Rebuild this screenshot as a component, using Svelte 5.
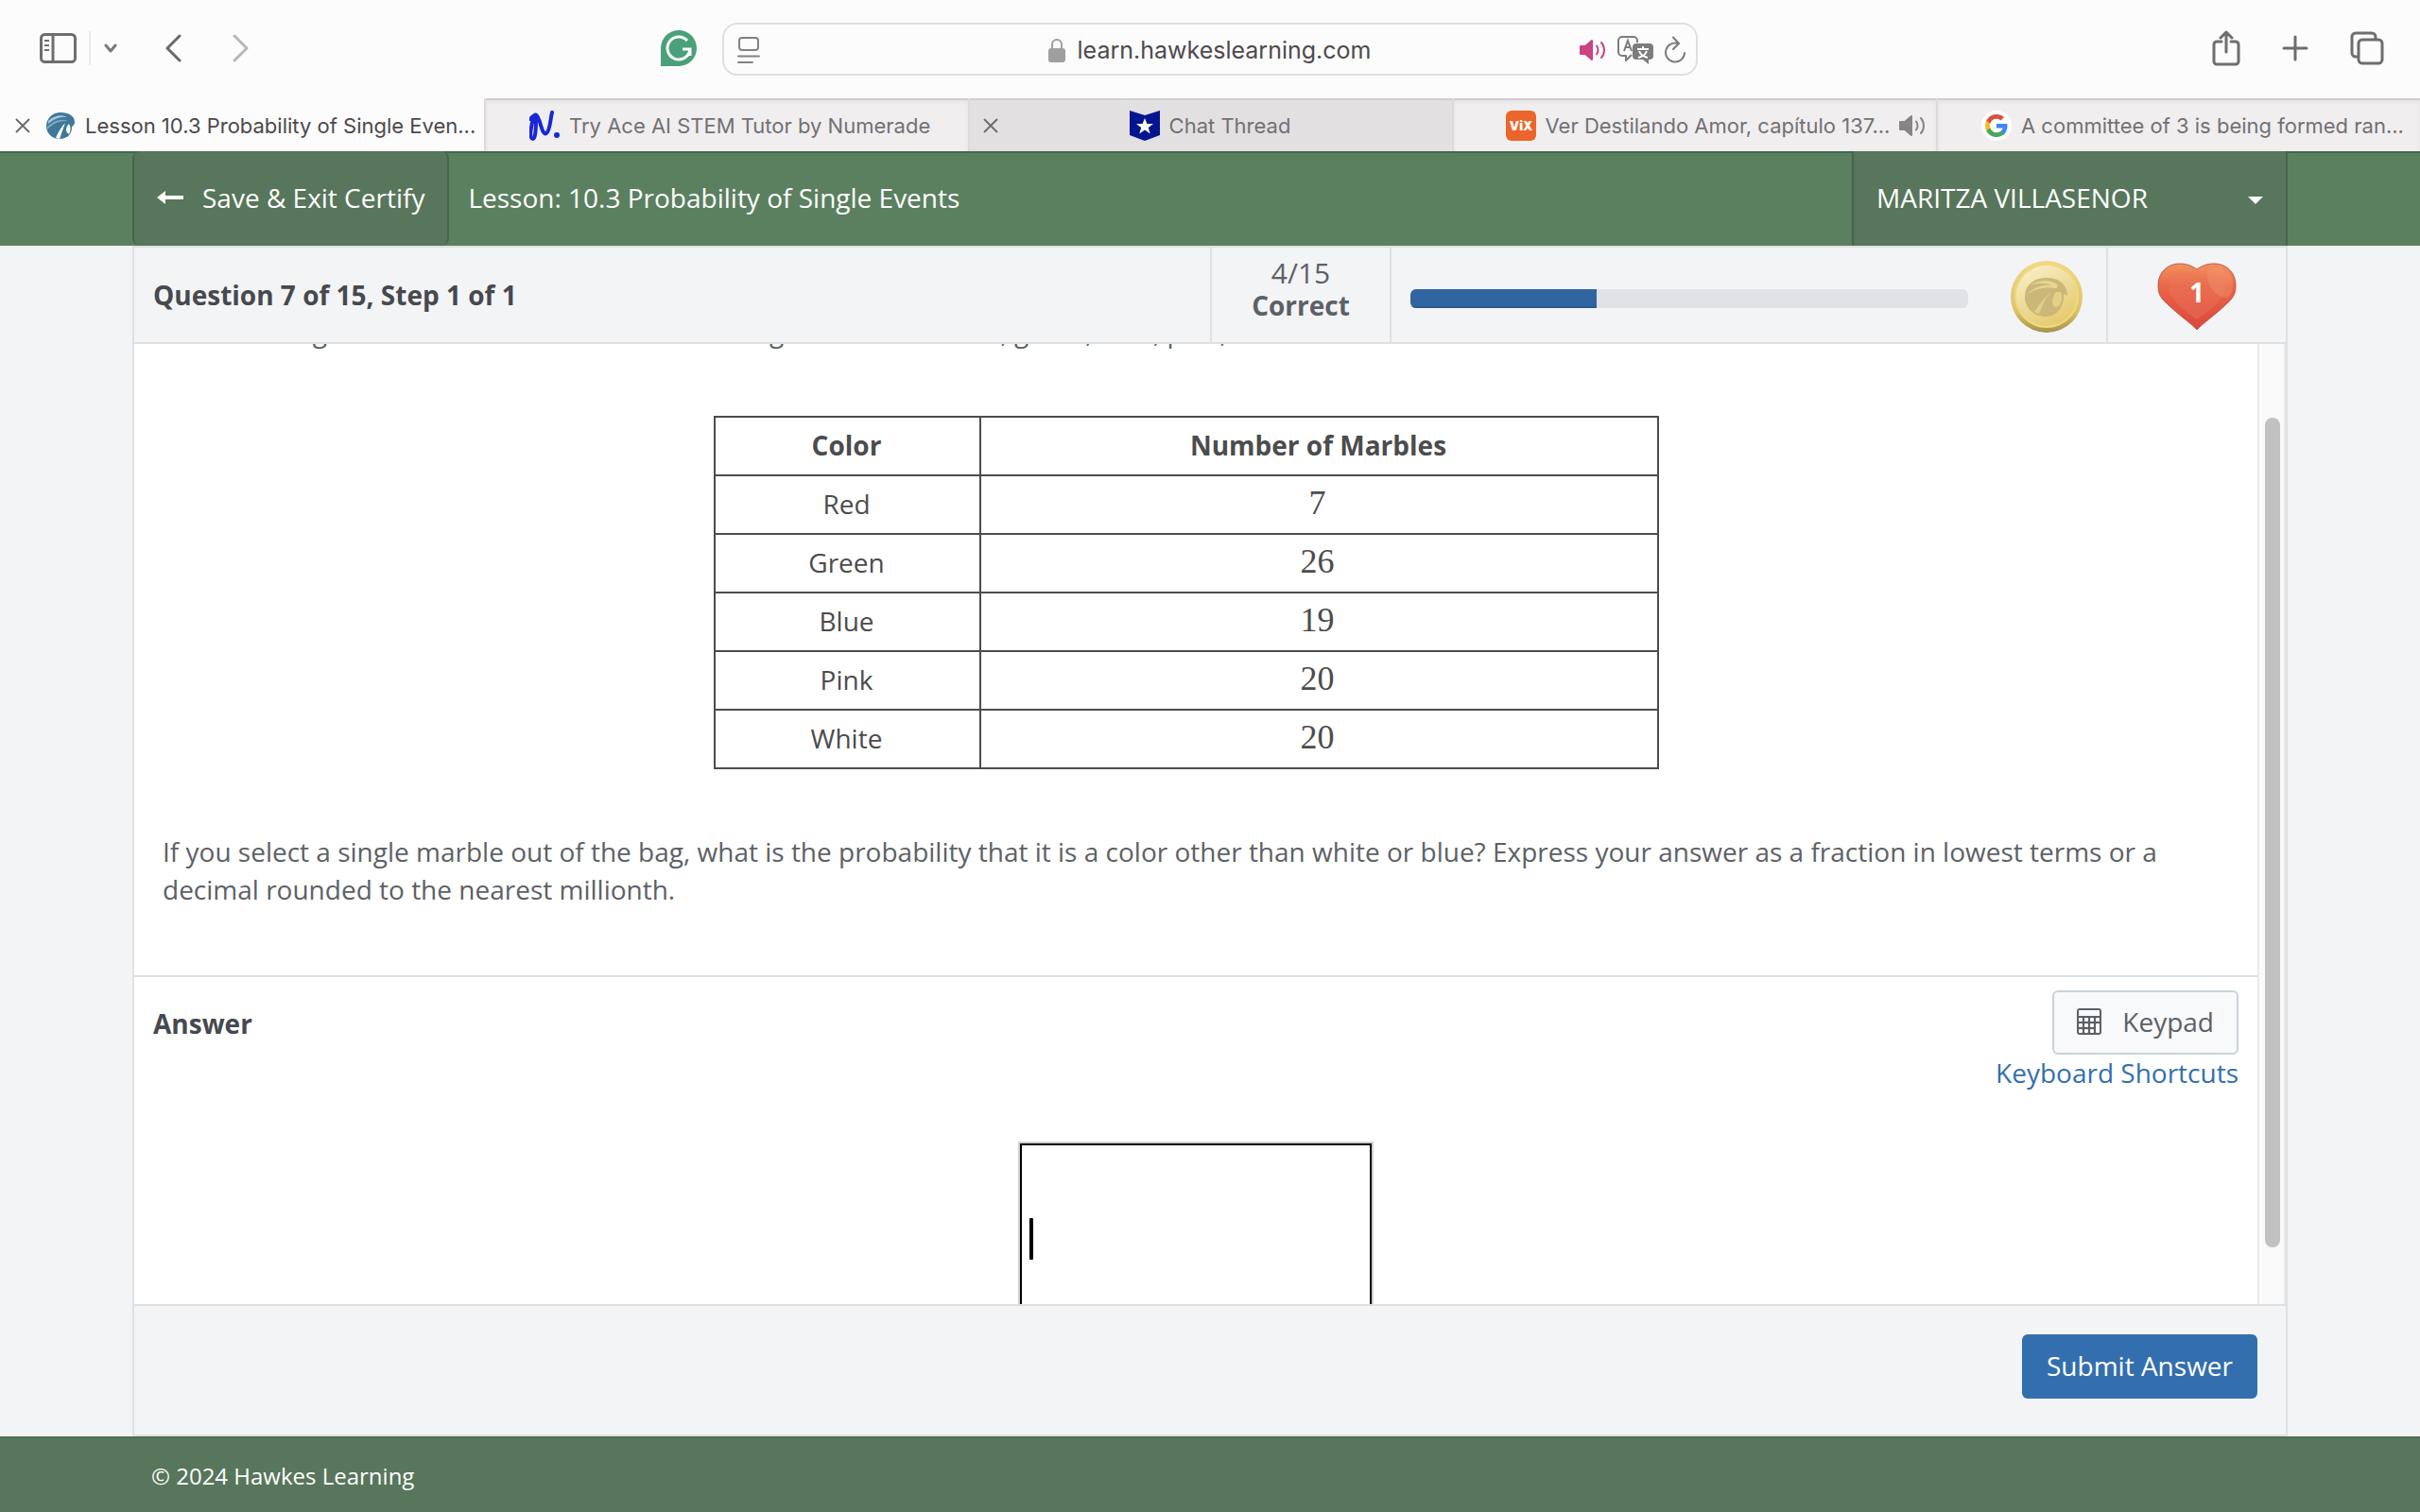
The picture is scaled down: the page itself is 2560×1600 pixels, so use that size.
<script>
    let correct = $state(4);
    let lives = $state(1);
    let answer = $state("");
    let pane;

    const tabs = [
        { title: "Lesson 10.3 Probability of Single Even...", icon: "hawkes", active: true, close: true },
        { title: "Try Ace AI STEM Tutor by Numerade", icon: "numerade" },
        { title: "Chat Thread", icon: "star", hover: true, close: true },
        { title: "Ver Destilando Amor, capítulo 137...", icon: "vix", audio: true },
        { title: "A committee of 3 is being formed ran...", icon: "google" },
    ];

    const marbles = [
        ["Red", 7],
        ["Green", 26],
        ["Blue", 19],
        ["Pink", 20],
        ["White", 20],
    ];

    // the bar counts towards the 12 needed for mastery
    let percent = $derived((correct / 12) * 100);

    $effect(() => {
        pane.scrollTop = 90;
    });
</script>

{#snippet speaker()}
    <svg width="30" height="24" viewBox="0 0 30 24" fill="none" stroke="currentColor" stroke-width="2" stroke-linecap="round">
        <path d="M2 8h5l7-6v20l-7-6H2z" fill="currentColor" stroke-linejoin="round" />
        <path d="M19 7.500c2 2.500 2 6.500 0 9M24 4c4 4.500 4 11.500 0 16" />
    </svg>
{/snippet}

{#snippet favicon(name)}
    <svg class="favicon" width="32" height="32" viewBox="0 0 32 32">
        {#if name === "hawkes"}
            <path d="M16 2C8 2 1 8 1 16.500 1 24 7 30 15 30c8 0 13-5 13-12 0-2 3-2 3-6C31 6 25 2 16 2z" fill="#3f789b" />
            <path d="M3 11C9 5 17 4 23 7c-7-.5-13 1-20 7z" fill="#a9c6d6" />
            <path d="M2 17C9 10 17 8 24 11c-8-.5-15 2-22 9z" fill="#7ea8bf" />
            <path d="M21 13c-4 4-7 9-10 16l4 1c2-6 4-11 6-17zM25 14c2 3 2 7 0 11-2-1-3-3-3-5 0-2 1-4 3-6z" fill="#fff" />
        {:else if name === "numerade"}
            <path d="M2 9c3-4 6-5 6-2 0 6 0 23-3 23-5 0-2-12 0-23 3-6 5 0 7 5 2 7 4 14 7 12 4-3 4-14 6-22" transform="translate(-1 0)" fill="none" stroke="#1828d8" stroke-width="4" stroke-linecap="round" stroke-linejoin="round" />
            <circle cx="29" cy="26" r="3" fill="#1828d8" />
        {:else if name === "star"}
            <path d="M0 0l16 5 16-5v26l-16 6-16-6z" fill="#04158f" />
            <path d="M16 8l2.400 6h6.600l-5.200 4 1.900 6.500-5.700-4-5.700 4 1.900-6.500-5.200-4h6.600z" fill="#fff" />
        {:else if name === "vix"}
            <rect width="32" height="32" rx="6" fill="#ec652b" />
            <text x="16" y="21" text-anchor="middle" font-family="Inter, sans-serif" font-size="13" font-weight="900" fill="#fff">ViX</text>
        {:else}
            <circle cx="16" cy="16" r="16" fill="#fff" />
            <g transform="translate(4 4)">
                <path d="M23.500 12.300c0-.9-.1-1.600-.2-2.300H12v4.500h6.500c-.3 1.500-1.100 2.800-2.400 3.700v3h3.900c2.200-2.100 3.500-5.100 3.500-8.900z" fill="#4285f4" />
                <path d="M12 24c3.200 0 6-1.100 8-2.900l-3.900-3c-1.100.7-2.400 1.200-4.100 1.200-3.100 0-5.800-2.100-6.700-5H1.300v3.100C3.300 21.300 7.300 24 12 24z" fill="#4ca65b" />
                <path d="M5.300 14.300c-.5-1.500-.5-3.100 0-4.600V6.600h-4c-1.700 3.400-1.700 7.400 0 10.800z" fill="#f3bb2c" />
                <path d="M12 4.800c1.800 0 3.300.6 4.600 1.800L20 3.100C17.900 1.200 15.200 0 12 0 7.300 0 3.300 2.700 1.300 6.600l4 3.100c.9-2.900 3.600-4.900 6.700-4.900z" fill="#d8503f" />
            </g>
        {/if}
    </svg>
{/snippet}

<div class="window">
    <div class="toolbar">
        <div class="tools left">
            <button class="tool sidebar" aria-label="Show sidebar">
                <svg width="40" height="32" viewBox="0 0 40 32" fill="none" stroke="#6f6d6e" stroke-width="3">
                    <rect x="1.500" y="1.500" width="36" height="29" rx="4" />
                    <path d="M14 2v28" />
                    <path d="M5 8h5M5 13h5M5 18h5" stroke-width="2" />
                </svg>
            </button>
            <button class="tool menu" aria-label="Tab groups">
                <svg width="14" height="10" viewBox="0 0 14 10" fill="none" stroke="#7b797a" stroke-width="3" stroke-linecap="round" stroke-linejoin="round">
                    <path d="M2 2l5 6 5-6" />
                </svg>
            </button>
            <button class="tool back" aria-label="Back">
                <svg width="18" height="30" viewBox="0 0 18 30" fill="none" stroke="#6a6869" stroke-width="3" stroke-linecap="round" stroke-linejoin="round">
                    <path d="M16 2L3 15l13 13" />
                </svg>
            </button>
            <button class="tool forward" aria-label="Forward">
                <svg width="18" height="30" viewBox="0 0 18 30" fill="none" stroke="#b9b7b8" stroke-width="3" stroke-linecap="round" stroke-linejoin="round">
                    <path d="M2 2l13 13L2 28" />
                </svg>
            </button>
            <button class="tool grammarly" aria-label="Grammarly">
                <svg width="38" height="38" viewBox="0 0 38 38" fill="none">
                    <path d="M19 0a19 19 0 0 1 0 38H0V19A19 19 0 0 1 19 0z" fill="#4aa078" />
                    <path d="M28 11a12 12 0 1 0 3 9h-8M31 19v8" stroke="#fff" stroke-width="3" />
                </svg>
            </button>
        </div>

        <div class="address">
            <svg width="24" height="30" viewBox="0 0 24 30" fill="none" stroke="#838182" stroke-width="2" stroke-linecap="round">
                <rect x="2" y="2" width="20" height="13" rx="3" />
                <path d="M1 21.500h22M1 28h15" />
            </svg>
            <div class="site">
                <svg width="20" height="26" viewBox="0 0 20 26" fill="none">
                    <rect x="1" y="11" width="18" height="15" rx="3" fill="#a09ea0" />
                    <path d="M5 12V7a5 5 0 0 1 10 0v5" stroke="#a09ea0" stroke-width="2" />
                </svg>
                <span>learn.hawkeslearning.com</span>
            </div>
            <div class="page-actions">
                <span class="playing">{@render speaker()}</span>
                <svg width="38" height="30" viewBox="0 0 38 30" fill="none">
                    <path d="M15 20l-6 6v-5H5a4 4 0 0 1-4-4V5a4 4 0 0 1 4-4h12a4 4 0 0 1 4 4v2" stroke="#7d7b7c" stroke-width="2" stroke-linejoin="round" />
                    <path d="M7 16l4-11 4 11M8 12h6" stroke="#7d7b7c" stroke-width="2" />
                    <path d="M20 8h14a4 4 0 0 1 4 4v9a4 4 0 0 1-4 4h-1v5l-6-5h-7a4 4 0 0 1-4-4v-9a4 4 0 0 1 4-4z" fill="#7d7b7c" />
                    <path d="M27 11v3M21 14h12M23 16c1 3 5 6 9 7M31 16c-1 3-5 6-9 7" stroke="#fff" stroke-width="2" />
                </svg>
                <svg width="24" height="30" viewBox="0 0 24 30" fill="none" stroke="#7d7b7c" stroke-width="2" stroke-linecap="round" stroke-linejoin="round">
                    <path d="M15 8A10 10 0 1 0 22 18M10 1.500l6 6.500-6 6" />
                </svg>
            </div>
        </div>

        <div class="tools right">
            <button class="tool" aria-label="Share">
                <svg width="30" height="38" viewBox="0 0 30 38" fill="none" stroke="#6f6d6e" stroke-width="3" stroke-linecap="round" stroke-linejoin="round">
                    <path d="M10 12H5a3 3 0 0 0-3 3v18a3 3 0 0 0 3 3h20a3 3 0 0 0 3-3V15a3 3 0 0 0-3-3h-5M15 23V2M9 8l6-6 6 6" />
                </svg>
            </button>
            <button class="tool" aria-label="New tab">
                <svg width="28" height="28" viewBox="0 0 28 28" fill="none" stroke="#6f6d6e" stroke-width="3" stroke-linecap="round">
                    <path d="M14 2v24M2 14h24" />
                </svg>
            </button>
            <button class="tool" aria-label="Tab overview">
                <svg width="36" height="36" viewBox="0 0 36 36" fill="none" stroke="#6f6d6e" stroke-width="3">
                    <path d="M9 27H6a4 4 0 0 1-4-4V6a4 4 0 0 1 4-4h17a4 4 0 0 1 4 4v3" />
                    <rect x="9" y="9" width="25" height="25" rx="4" />
                </svg>
            </button>
        </div>
    </div>

    <div class="tabs">
        {#each tabs as tab}
            <div class="tab" class:active={tab.active} class:hover={tab.hover}>
                <div class="lead">
                    {#if tab.close}
                        <button class="tool" aria-label="Close tab">
                            <svg width="16" height="16" viewBox="0 0 16 16" fill="none" stroke="#6f6d6e" stroke-width="2">
                                <path d="M1 1l14 14M15 1L1 15" />
                            </svg>
                        </button>
                    {/if}
                </div>
                <div class="label">
                    {@render favicon(tab.icon)}
                    <span>{tab.title}</span>
                </div>
                <div class="trail" class:audio={tab.audio}>
                    {#if tab.audio}{@render speaker()}{/if}
                </div>
            </div>
        {/each}
    </div>

    <header>
        <button class="exit">
            <svg width="28" height="14" viewBox="0 0 28 14" fill="#fff">
                <path d="M0 7l9-7v5h19v4H9v5z" />
            </svg>
            Save &amp; Exit Certify
        </button>
        <span class="lesson">Lesson: 10.3 Probability of Single Events</span>
        <button class="user">
            MARITZA VILLASENOR
            <svg width="16" height="8" viewBox="0 0 16 8" fill="#fff"><path d="M0 0h16l-8 8z" /></svg>
        </button>
    </header>

    <main>
        <div class="status">
            <h1>Question 7 of 15, Step 1 of 1</h1>
            <div class="score">
                <span>{correct}/15</span>
                <b>Correct</b>
            </div>
            <div class="mastery">
                <div class="bar"><div class="fill" style="width: {percent}%"></div></div>
                <svg width="76" height="76" viewBox="0 0 76 76">
                    <defs>
                        <linearGradient id="rim" x1="0" y1="0" x2="0" y2="1">
                            <stop offset="0" stop-color="#f1d983" />
                            <stop offset="0.700" stop-color="#ddc368" />
                            <stop offset="1" stop-color="#a6924b" />
                        </linearGradient>
                        <linearGradient id="face" x1="0.200" y1="0" x2="0.700" y2="1">
                            <stop offset="0" stop-color="#faefc6" />
                            <stop offset="0.500" stop-color="#ecdb98" />
                            <stop offset="1" stop-color="#e6c969" />
                        </linearGradient>
                    </defs>
                    <circle cx="38" cy="38" r="38" fill="url(#rim)" />
                    <circle cx="38" cy="37" r="34" fill="#f0d980" />
                    <circle cx="38" cy="37" r="32" fill="url(#face)" />
                    <path d="M15 36c1-11 10-18 23-18 12 0 22 6 22 19l-4-2c1 14-7 24-19 24-13 0-23-10-22-23z" fill="#cbb878" />
                    <path d="M19 27c8-6 19-8 27-4 6 3 4 7 0 6-9-2-18 0-28 6 7-7 16-10 26-9-8-3-17-3-25 1z" fill="#e6d696" />
                    <path d="M43 33C36 38 30 47 25 54l5 2c3-8 7-17 13-23zM48 33c-5 7-5 14-1 16 6 0 9-9 6-16z" fill="#e6cf86" />
                </svg>
            </div>
            <div class="lives">
                <svg width="84" height="72" viewBox="0 0 84 72">
                    <defs>
                        <linearGradient id="heart" x1="0" y1="0" x2="0" y2="1">
                            <stop offset="0" stop-color="#f2935e" />
                            <stop offset="0.350" stop-color="#ea6547" />
                            <stop offset="1" stop-color="#d9473d" />
                        </linearGradient>
                    </defs>
                    <path d="M42 71C37 65 22 55 9 42 2 36 1 30 1 24 1 10 11 1 24 1c8 0 14 3 18 6 4-3 10-6 18-6 13 0 23 9 23 23 0 6-1 12-8 18C62 55 47 65 42 71z" fill="url(#heart)" stroke="#c4574d" stroke-width="1" />
                    <path d="M42 60C30 52 12 38 12 26c0-10 8-15 15-15 6 0 12 3 15 7 3-4 9-7 15-7 7 0 15 5 15 15 0 12-18 26-30 34z" fill="#e9795f" opacity="0.400" />
                    <path d="M53 8c14-6 27 2 27 15 0 6-2 12-6 15-10-2-22-10-21-30z" fill="#f4a47b" opacity="0.300" />
                    <text x="42" y="42" text-anchor="middle" font-family="Open Sans, sans-serif" font-size="28" font-weight="700" fill="#fff">{lives}</text>
                </svg>
            </div>
        </div>

        <div class="body">
            <div class="pane" bind:this={pane}>
                <section class="question">
                    <p>The following table describes marbles within a bag that contains red, green, blue, pink, and white marbles.</p>
                    <table>
                        <thead>
                            <tr><th>Color</th><th>Number of Marbles</th></tr>
                        </thead>
                        <tbody>
                            {#each marbles as [color, count]}
                                <tr><td>{color}</td><td class="count">{count}</td></tr>
                            {/each}
                        </tbody>
                    </table>
                    <p>If you select a single marble out of the bag, what is the probability that it is a color other than white or blue? Express your answer as a fraction in lowest terms or a decimal rounded to the nearest millionth.</p>
                </section>

                <section class="answer">
                    <div class="answer-head">
                        <h2><label for="answer">Answer</label></h2>
                        <div class="helpers">
                            <button class="keypad">
                                <svg width="26" height="28" viewBox="0 0 26 28">
                                    <rect width="26" height="28" rx="3" fill="#5c6166" />
                                    <path d="M2 2h22v6H2z" fill="#f7f9fb" />
                                    <g fill="#f7f9fb">
                                        {#each [10, 16, 22] as y}
                                            {#each [2, 8, 14] as x}
                                                <rect {x} {y} width="4" height="4" rx="1" />
                                            {/each}
                                        {/each}
                                        <rect x="20" y="10" width="4" height="4" rx="1" />
                                        <rect x="20" y="16" width="4" height="10" rx="1" />
                                    </g>
                                </svg>
                                Keypad
                            </button>
                            <a href="#shortcuts">Keyboard Shortcuts</a>
                        </div>
                    </div>
                    <div class="entry">
                        <input id="answer" type="text" autocomplete="off" bind:value={answer}>
                        {#if !answer}<span class="cursor"></span>{/if}
                    </div>
                </section>
            </div>
            <div class="track"><div class="thumb"></div></div>
        </div>

        <div class="submit">
            <button>Submit Answer</button>
        </div>
    </main>

    <footer>© 2024 Hawkes Learning</footer>
</div>

<style>
    :global(body) {
        background: #f3f4f6;
    }

    .window {
        display: flex;
        flex-direction: column;
        height: 100vh;
        font-family: "Open Sans", "Noto Sans", sans-serif;
        font-size: 28px;
        line-height: 40px;
        color: #5c6166;
    }

    button {
        font: inherit;
        color: inherit;
        border: none;
        background: none;
        padding: 0;
        cursor: pointer;
    }

    svg {
        display: block;
        flex: none;
    }

    h1, h2, p {
        margin: 0;
        font-size: 28px;
    }

    h1, h2 {
        color: #46494e;
    }

    /* browser chrome */
    .toolbar {
        display: grid;
        grid-template-columns: 1fr minmax(0, 1032px) 1fr;
        align-items: center;
        height: 104px;
        background: #fdfcfd;
        font-family: Inter, "Liberation Sans", sans-serif;
    }

    .tools {
        display: flex;
        align-items: center;
        padding-bottom: 2px;
    }

    .left {
        padding-left: 42px;
        padding-right: 27px;
    }

    .sidebar {
        padding-right: 12px;
    }

    .menu {
        display: flex;
        align-items: center;
        height: 36px;
        padding-left: 14px;
        border-left: 2px solid #ebe9ea;
    }

    .back {
        padding-left: 50px;
    }

    .forward {
        padding-left: 54px;
    }

    .grammarly {
        margin-left: auto;
    }

    .right {
        justify-content: flex-end;
        gap: 44px;
        padding-right: 38px;
    }

    .address {
        display: flex;
        align-items: center;
        justify-content: space-between;
        box-sizing: border-box;
        height: 56px;
        padding: 2px 10px 0 14px;
        border: 2px solid #e0dedf;
        border-radius: 16px;
    }

    .site {
        display: flex;
        align-items: center;
        gap: 12px;
        padding-left: 84px;
        font-size: 25px;
        line-height: 32px;
        color: #4d4b4c;
    }

    .page-actions {
        display: flex;
        align-items: center;
        gap: 11px;
    }

    .playing {
        color: #cc4283;
    }

    .tabs {
        display: grid;
        grid-template-columns: repeat(5, minmax(0, 1fr));
        height: 56px;
        background: #fdfcfd;
        font-family: Inter, "Liberation Sans", sans-serif;
        font-size: 22px;
        line-height: 28px;
        color: #737173;
    }

    .tab {
        display: flex;
        align-items: center;
        box-sizing: border-box;
        padding-top: 2px;
        border-left: 2px solid #dcdadb;
        background: #f0eeef;
        box-shadow: inset 0 2px 0 #cfcdce, inset 0 4px 4px #e4e2e3;
    }

    .tab.hover {
        background: #e2e0e1;
    }

    .tab.active {
        border-left-color: transparent;
        background: #fdfcfd;
        box-shadow: none;
        color: #4b494a;
    }

    .lead {
        flex: none;
        box-sizing: border-box;
        width: 46px;
        padding-left: 14px;
    }

    .label {
        display: flex;
        flex: 1 0 auto;
        align-items: center;
        justify-content: center;
        gap: 10px;
        white-space: nowrap;
    }

    .trail {
        flex: 0 1 48px;
        color: #868485;
    }

    .audio {
        flex: none;
        padding-right: 10px;
    }

    /* lesson header */
    header {
        display: flex;
        align-items: stretch;
        box-sizing: border-box;
        height: 100px;
        padding: 0 140px;
        background: linear-gradient(#42694a 2px, #5b8060 2px);
        color: #fff;
    }

    .exit {
        display: flex;
        align-items: center;
        gap: 20px;
        padding: 0 24px 2px;
        border: 2px solid #47654b;
        border-width: 0 2px;
        border-radius: 8px;
        background: #57765b;
    }

    .lesson {
        align-self: center;
        padding: 0 0 2px 20px;
    }

    .user {
        display: flex;
        align-items: center;
        justify-content: space-between;
        box-sizing: border-box;
        width: 461px;
        margin-left: auto;
        padding: 0 24px 2px;
        border: 2px solid #47654b;
        border-width: 0 2px;
        background: #57765b;
    }

    .user svg {
        margin-top: 6px;
    }

    main {
        display: flex;
        flex: 1;
        flex-direction: column;
        min-height: 0;
        margin: 0 140px;
        border: 2px solid #dfe0e1;
    }

    .status {
        display: flex;
        height: 100px;
        border-bottom: 2px solid #dfe0e1;
    }

    .status h1 {
        flex: 1;
        align-self: center;
        padding-left: 20px;
    }

    .score, .mastery, .lives {
        display: flex;
        align-items: center;
        box-sizing: border-box;
        border-left: 2px solid #dfe0e1;
    }

    .score {
        flex-direction: column;
        justify-content: center;
        width: 190px;
        padding-bottom: 12px;
        line-height: 34px;
    }

    .score span {
        font-size: 30px;
    }

    .mastery {
        width: 758px;
        gap: 45px;
        padding: 4px 25px 0 20px;
    }

    .bar {
        flex: 1;
        height: 20px;
        margin-top: 4px;
        border-radius: 6px;
        background: #e1e2e6;
        overflow: hidden;
    }

    .fill {
        height: 100%;
        background: #3065a2;
        box-shadow: inset 0 -2px 0 #2a588e;
    }

    .lives {
        justify-content: center;
        width: 190px;
        padding-top: 4px;
    }

    .body {
        display: flex;
        flex: 1;
        min-height: 0;
        background: #fff;
    }

    .pane {
        flex: 1;
        overflow: hidden;
    }

    .question {
        padding: 57px 50px 71px 30px;
        border-bottom: 2px solid #dfe0e1;
    }

    table {
        width: 1000px;
        margin: 69px auto 67px;
        border-collapse: collapse;
        table-layout: fixed;
        color: #4c4c4c;
        text-align: center;
    }

    th, td {
        box-sizing: border-box;
        height: 62px;
        padding: 0 2px 2px 0;
        border: 2px solid #4c4c4c;
    }

    th:first-child {
        width: 281px;
    }

    .count {
        padding: 0 4px 4px 0;
        font-family: "Liberation Serif", serif;
        font-size: 36px;
    }

    .answer {
        padding: 14px 20px 40px;
    }

    .answer-head {
        display: flex;
        justify-content: space-between;
    }

    .answer-head h2 {
        padding-top: 15px;
    }

    .helpers {
        display: flex;
        flex-direction: column;
        align-items: flex-end;
    }

    .keypad {
        display: flex;
        align-items: center;
        gap: 22px;
        height: 68px;
        padding: 0 24px 2px;
        border: 2px solid #c8d3da;
        border-radius: 6px;
        background: #f7f9fb;
    }

    a {
        line-height: 38px;
        color: #336fae;
        text-decoration: none;
    }

    .entry {
        position: relative;
        width: 376px;
        margin: 54px auto 0;
    }

    .entry input {
        display: block;
        box-sizing: border-box;
        width: 100%;
        height: 206px;
        padding: 0 12px;
        border: 2px solid #d0d0d0;
        outline: 2px solid #000;
        outline-offset: -4px;
        background: #fff;
        font: inherit;
    }

    .cursor {
        position: absolute;
        top: 81px;
        left: 12px;
        width: 4px;
        height: 44px;
        border-radius: 1px;
        background: #000;
    }

    .track {
        box-sizing: border-box;
        width: 30px;
        padding: 78px 4px 60px 6px;
        border: 2px solid #e9e9e9;
        border-width: 0 2px;
        background: #fafafa;
    }

    .thumb {
        height: 100%;
        border-radius: 8px;
        background: #c1c1c1;
    }

    .submit {
        display: flex;
        justify-content: flex-end;
        padding: 30px 30px 38px;
        border-top: 2px solid #dfe0e1;
    }

    .submit button {
        height: 68px;
        padding: 0 26px 2px;
        border-radius: 6px;
        background: #336fae;
        color: #fff;
    }

    footer {
        box-sizing: border-box;
        height: 80px;
        padding: 20px 160px;
        border-top: 2px solid #4b6f50;
        background: #57765b;
        color: #fff;
        font-size: 24px;
    }
</style>
